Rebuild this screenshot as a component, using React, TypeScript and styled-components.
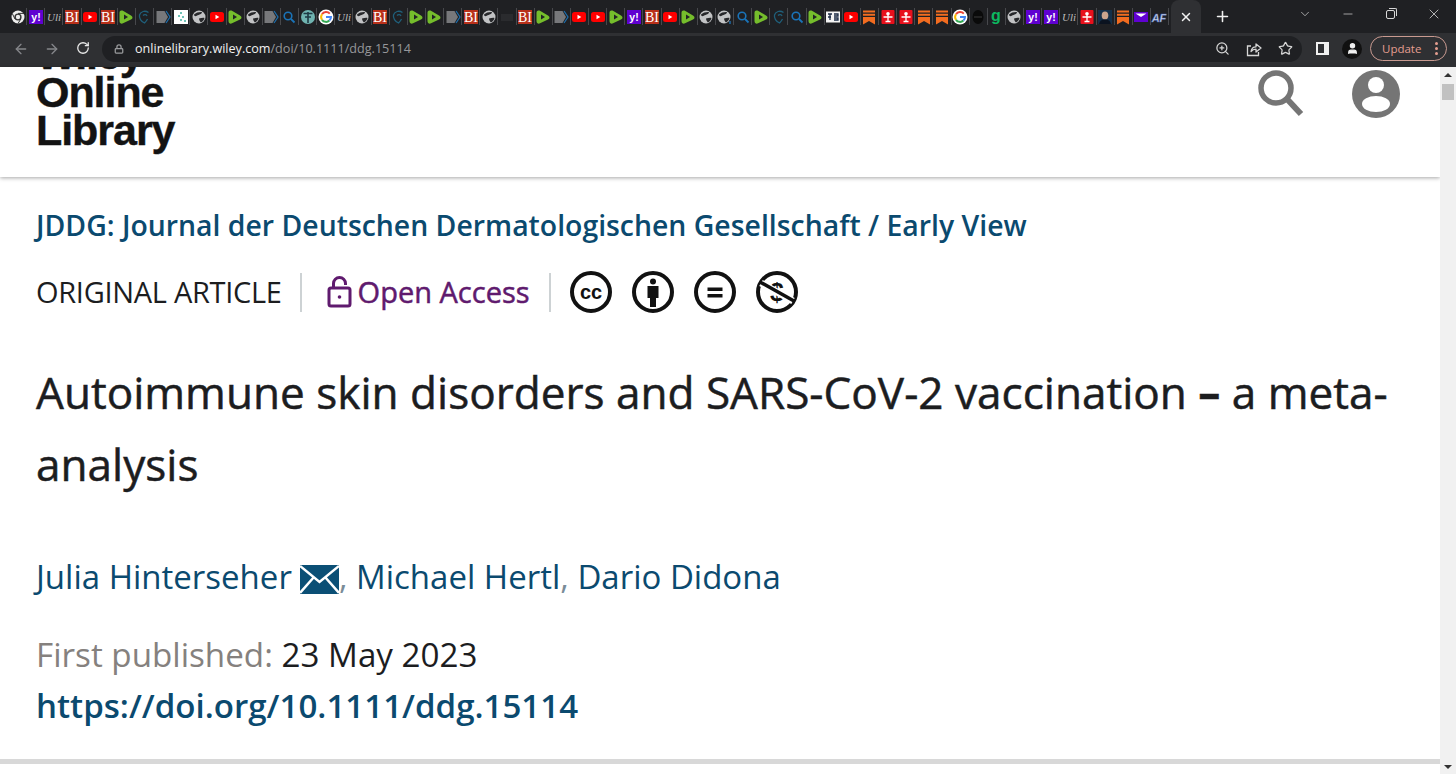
import React from 'react';
import styled, { createGlobalStyle } from 'styled-components';
import { ArrowLeft, ArrowRight, RotateCw, Lock, ZoomIn, Star, Plus, X, ChevronDown, Minus, User } from 'lucide-react';

type FaviconKind =
    | 'chrome' | 'yahoo' | 'uli' | 'bi' | 'youtube' | 'rumble' | 'shield' | 'arrow' | 'dots'
    | 'globe' | 'globeSearch' | 'search' | 'tree' | 'google' | 'dark' | 'blank' | 'zh'
    | 'bookmark' | 'red' | 'green' | 'photo' | 'mail' | 'af';

const favicons: FaviconKind[] = [
    'chrome', 'yahoo', 'uli', 'bi', 'youtube', 'bi', 'rumble', 'shield', 'arrow', 'dots', 'globe', 'youtube', 'rumble',
    'globe', 'arrow', 'search', 'tree', 'google', 'uli', 'globe', 'bi', 'shield', 'rumble', 'rumble', 'arrow', 'bi',
    'globe', 'blank', 'bi', 'rumble', 'arrow', 'youtube', 'youtube', 'rumble', 'yahoo', 'bi', 'youtube', 'rumble',
    'globe', 'globeSearch', 'search', 'rumble', 'shield', 'search', 'rumble', 'zh', 'youtube', 'bookmark', 'red', 'red',
    'bookmark', 'bookmark', 'google', 'dark', 'green', 'globe', 'yahoo', 'yahoo', 'uli', 'red', 'photo', 'bookmark',
    'mail', 'af',
];

const GlobalStyle = createGlobalStyle`
    html, body {
        margin: 0;
        height: 100%;
        overflow: hidden;
        background: #fff;
    }
`;

const Screen = styled.div`
    display: flex;
    flex-direction: column;
    width: 1456px;
    height: 774px;
    font-family: "Open Sans", sans-serif;
`;

const TabStrip = styled.div`
    display: flex;
    align-items: center;
    height: 33px;
    padding-left: 9px;
    background: #1f2023;
`;

const FaviconSlot = styled.div`
    display: flex;
    align-items: center;
    justify-content: center;
    flex: none;
    width: 18.13px;
    height: 17px;
    box-sizing: border-box;
    border-right: 1px solid #47484c;
`;

const ActiveTab = styled.div`
    display: flex;
    align-items: center;
    justify-content: center;
    flex: none;
    width: 30px;
    height: 33px;
    margin-left: 2px;
    border-radius: 8px 8px 0 0;
    background: #2f3033;
    color: #f1f1f1;
`;

const NewTab = styled.div`
    display: flex;
    margin-left: 13px;
    color: #f1f1f1;
`;

const WindowControls = styled.div`
    display: flex;
    align-items: center;
    margin-left: 52px;
    height: 28px;
    margin-top: -5px;
    color: #d8d8d8;
`;

const WindowButton = styled.div<{ $width: number }>`
    display: flex;
    justify-content: center;
    width: ${p => p.$width}px;
`;

const RestoreIcon = styled.div`
    position: relative;
    box-sizing: border-box;
    width: 9px;
    height: 9px;
    border: 1px solid #d8d8d8;
    border-radius: 2px;

    &::after {
        content: '';
        position: absolute;
        top: -3px;
        right: -3px;
        width: 8px;
        height: 8px;
        box-sizing: border-box;
        border-top: 1px solid #d8d8d8;
        border-right: 1px solid #d8d8d8;
        border-radius: 0 2px 0 0;
    }
`;

const Toolbar = styled.div`
    display: flex;
    align-items: center;
    height: 34px;
    padding-bottom: 3px;
    box-sizing: border-box;
    background: #2f3033;
    color: #8c8d90;
`;

const NavButton = styled.div<{ $bright?: boolean }>`
    display: flex;
    justify-content: center;
    flex: none;
    width: 31px;
    color: ${p => (p.$bright ? '#e8e8e8' : '#85868a')};
`;

const NavGroup = styled.div`
    display: flex;
    padding-left: 5px;
`;

const Omnibox = styled.div`
    display: flex;
    align-items: center;
    flex: none;
    width: 1200px;
    height: 26px;
    margin-left: 4px;
    padding: 0 9px 0 12px;
    box-sizing: border-box;
    border-radius: 13px;
    background: #1f2023;
    color: #9a9b9e;
`;

const UrlText = styled.div`
    margin-left: 11px;
    font-size: 12.6px;
    white-space: nowrap;
    color: #96979a;
`;

const UrlHost = styled.span`
    color: #f1f1f1;
`;

const OmniboxActions = styled.div`
    display: flex;
    align-items: center;
    gap: 16px;
    margin-left: auto;
    color: #d6d6d6;
`;

const SidePanelIcon = styled.div`
    flex: none;
    width: 6px;
    height: 9px;
    margin-left: 14px;
    border: solid #f1f1f1;
    border-width: 2px 5px 2px 2px;
    background: #2f3033;
`;

const Avatar = styled.div`
    display: flex;
    align-items: center;
    justify-content: center;
    flex: none;
    width: 20px;
    height: 20px;
    margin-left: 13px;
    border-radius: 50%;
    background: #111;
    color: #f1f1f1;
`;

const UpdatePill = styled.div`
    display: flex;
    align-items: center;
    justify-content: space-between;
    flex: none;
    width: 77px;
    height: 25px;
    margin-left: 8px;
    padding: 0 8px 0 11px;
    box-sizing: border-box;
    border: 1px solid #c99a90;
    border-radius: 13px;
    font-size: 11.5px;
    color: #e59e90;
`;

const MenuDots = styled.div`
    display: flex;
    flex-direction: column;
    gap: 2px;
`;

const Dot = styled.span`
    width: 3px;
    height: 3px;
    border-radius: 50%;
    background: #e59e90;
`;

const Viewport = styled.div`
    display: flex;
    flex: 1;
    min-height: 0;
`;

const Page = styled.div`
    display: flex;
    flex-direction: column;
    flex: 1;
    min-width: 0;
    background: #fff;
`;

const SiteHeader = styled.header`
    display: flex;
    flex: none;
    height: 110px;
    padding-left: 36px;
    overflow: hidden;
    box-shadow: 0 1px 4px rgba(0, 0, 0, 0.35);
`;

const Logo = styled.div`
    margin-top: -32px;
    font-family: "Liberation Sans", Arial, sans-serif;
    font-size: 43px;
    font-weight: 700;
    line-height: 38px;
    letter-spacing: -1.05px;
    -webkit-text-stroke: 0.4px #131313;
    color: #131313;
`;

const HeaderActions = styled.div`
    display: flex;
    align-items: flex-start;
    margin-left: auto;
    padding: 3px 40px 0 0;
    gap: 47px;
`;

const Article = styled.main`
    display: flex;
    flex-direction: column;
    flex: 1;
    padding-left: 36px;
`;

const JournalLink = styled.a`
    margin-top: 28px;
    font-size: 28.4px;
    font-weight: 600;
    line-height: 40px;
    color: #0b4a6f;
`;

const MetaRow = styled.div`
    display: flex;
    align-items: center;
    height: 42px;
    margin-top: 26px;
`;

const ArticleType = styled.span`
    margin-right: 18px;
    font-size: 29px;
    line-height: 42px;
    letter-spacing: -0.3px;
    color: #1c1d1f;
`;

const MetaDivider = styled.span`
    flex: none;
    width: 2px;
    height: 39px;
    background: #cdd2d4;
`;

const OpenAccess = styled.div`
    display: flex;
    align-items: center;
    gap: 6px;
    margin: 0 19px 0 25px;
    font-size: 29px;
    line-height: 42px;
    -webkit-text-stroke: 0.5px #5f1a6e;
    color: #5f1a6e;
`;

const LicenseIcons = styled.div`
    display: flex;
    gap: 20px;
    margin-left: 19px;
`;

const Title = styled.h1`
    margin: 43px 0 0;
    max-width: 1380px;
    font-size: 44.1px;
    font-weight: 400;
    line-height: 72px;
    -webkit-text-stroke: 0.5px #1c1d1f;
    color: #1c1d1f;
`;

const Authors = styled.div`
    display: flex;
    align-items: center;
    margin-top: 55px;
    font-size: 33px;
    line-height: 44px;
    color: #0b4a6f;
`;

const Comma = styled.span`
    color: #7a8c98;
`;

const MailIcon = styled.svg`
    margin: 5px 0 0 8px;
`;

const Published = styled.div`
    margin-top: 31px;
    font-size: 33.2px;
    line-height: 50px;
    color: #1c1d1f;
`;

const PublishedLabel = styled.span`
    color: #85817e;
`;

const DoiLink = styled.a`
    margin-top: 1px;
    font-size: 33.1px;
    font-weight: 600;
    line-height: 50px;
    color: #0b4a6f;
`;

const PageDivider = styled.div`
    flex: none;
    height: 5px;
    margin-bottom: 10px;
    background: #d8d8d8;
`;

const Scrollbar = styled.div`
    display: flex;
    flex-direction: column;
    align-items: center;
    flex: none;
    width: 16px;
    background: #f1f1f1;
`;

const ScrollArrow = styled.div<{ $down?: boolean }>`
    flex: none;
    width: 0;
    height: 0;
    margin: ${p => (p.$down ? 'auto 0 5px' : '6px 0 0')};
    border-left: 4px solid transparent;
    border-right: 4px solid transparent;
    ${p => (p.$down ? 'border-top: 4px solid #333;' : 'border-bottom: 4px solid #333;')}
`;

const ScrollThumb = styled.div`
    flex: none;
    width: 12px;
    height: 16px;
    margin-top: 7px;
    background: #c1c1c1;
`;

const iconFont = { fontFamily: '"Liberation Sans", sans-serif', fontWeight: 700 };

const Favicon = ({ kind }: { kind: FaviconKind }) => {
    const content = () => {
        switch (kind) {
            case 'chrome':
                return <>
                    <circle cx="8" cy="8" r="6.5" fill="#eee" />
                    <circle cx="8" cy="8" r="3.6" fill="#333" />
                    <circle cx="8" cy="8" r="2.2" fill="#eee" />
                    <path d="M8 4.4h6M5 10L2.5 5M10.8 10L8 14.5" stroke="#333" strokeWidth="1" />
                </>;
            case 'yahoo':
                return <>
                    <rect x="1" y="1" width="14" height="14" fill="#5f01d1" />
                    <text x="8" y="12" fontSize="10.5" fill="#fff" textAnchor="middle" style={iconFont}>y!</text>
                </>;
            case 'uli':
                return <text x="8" y="12" fontSize="11" fill="#bbb" textAnchor="middle" fontStyle="italic" fontFamily="Liberation Serif, serif">Uli</text>;
            case 'bi':
                return <>
                    <rect x="1" y="1" width="14" height="14" fill="#b8301a" />
                    <text x="8" y="13" fontSize="14" fill="#fff" textAnchor="middle" fontFamily="Liberation Serif, serif">BI</text>
                </>;
            case 'youtube':
                return <>
                    <rect x="1" y="3" width="14" height="10" rx="2.5" fill="#f00" />
                    <path d="M6.5 5.8L10.3 8L6.5 10.2Z" fill="#fff" />
                </>;
            case 'rumble':
                return <>
                    <path d="M3.5 1.5C2 1.5 1.5 2.5 1.5 4v8c0 2 1.5 3 3 2.6l8.5-4c2-1 2-3.2 0-4.2l-8.5-4.9z" fill="#75bd2c" />
                    <path d="M6 5.5L10 8L6 10.5Z" fill="#202124" />
                </>;
            case 'shield':
                return <path d="M12.5 3.5C9 1 4.5 2.5 3.5 6c-.6 3 1.5 6.5 5 8 1-1 2-2 3-4M7 6.5c1.5-1.5 3.5-1 4 .5" fill="none" stroke="#1f5f7a" strokeWidth="1.3" />;
            case 'arrow':
                return <>
                    <path d="M1.5 2H9.5L13 8L9.5 14H1.5Z" fill="#77787b" />
                    <path d="M11 2L15 8L11 14" fill="none" stroke="#1c6fb0" strokeWidth="1.2" />
                </>;
            case 'dots':
                return <>
                    <rect x="1" y="1" width="14" height="14" fill="#fff" />
                    <path d="M7 3h2v2H7zM5 6h2v2H5zM9 7h2v2H9zM7 10h2v2H7zM11 11h2v2h-2z" fill="#6fc3b8" />
                </>;
            case 'globe':
            case 'globeSearch':
                return <>
                    <circle cx="8" cy="8" r="6.5" fill="#c2c3c5" />
                    <path d="M3 5.5C5 3.5 8 2.8 11 3c0 2-2 2.5-3.5 3C6 6.500 5 7.500 3.500 7zM8 9.500c2-.5 4.500-1 5.500-.5-.5 2-2 3.500-3.500 4.500-1-1-2-2.500-2-4z" fill="#27282b" />
                    {kind === 'globeSearch' && <path d="M14 12v3" stroke="#1c6fb0" strokeWidth="1.4" />}
                </>;
            case 'search':
                return <>
                    <circle cx="7" cy="7" r="3.8" fill="none" stroke="#1a73b8" strokeWidth="1.6" />
                    <path d="M10 10L13.500 13.500" stroke="#1a73b8" strokeWidth="1.8" />
                </>;
            case 'tree':
                return <>
                    <circle cx="8" cy="8" r="7" fill="#6fb3b0" />
                    <path d="M3.500 4.500h9M8 3v11M5 8h6" stroke="#1e3a44" strokeWidth="1.6" />
                </>;
            case 'google':
                return <>
                    <circle cx="8" cy="8" r="7.500" fill="#fff" />
                    <path d="M11.800 4.600A5 5 0 0 0 4 5.200" fill="none" stroke="#ea4335" strokeWidth="2" />
                    <path d="M4 5.200A5 5 0 0 0 4 10.800" fill="none" stroke="#fbbc05" strokeWidth="2" />
                    <path d="M4 10.800A5 5 0 0 0 11.400 11.600" fill="none" stroke="#34a853" strokeWidth="2" />
                    <path d="M11.400 11.600A5 5 0 0 0 13 8H8" fill="none" stroke="#4285f4" strokeWidth="2" />
                </>;
            case 'dark':
                return <>
                    <ellipse cx="8" cy="8" rx="5.500" ry="7" fill="#0a0a0a" />
                    <path d="M4 8h8" stroke="#333" strokeWidth="1.200" />
                </>;
            case 'blank':
                return <rect x="2" y="5" width="12" height="7" fill="#2a2b2e" />;
            case 'zh':
                return <>
                    <rect x="1" y="2.500" width="14" height="11" fill="#f4f4f4" />
                    <path d="M3 5h4M5 5v6M9 5h4v2h-4M9 9h4v2H9M3 8h3" stroke="#1a2a44" strokeWidth="1.300" fill="none" />
                </>;
            case 'bookmark':
                return <path d="M2 1.500h12v2H2zM2 4.700h12v2H2zM2 8h12v7.500L8 12l-6 3.500z" fill="#f26c20" />;
            case 'red':
                return <>
                    <rect x="1.500" y="1" width="13" height="14" rx="1" fill="#e8101c" />
                    <circle cx="8" cy="4.800" r="1.800" fill="#fff" />
                    <path d="M3.500 8h9M8 6v6M5.500 12.500h5" stroke="#fff" strokeWidth="1.300" />
                </>;
            case 'green':
                return <text x="8" y="11.500" fontSize="16" fill="#0cb760" textAnchor="middle" style={iconFont}>g</text>;
            case 'photo':
                return <>
                    <rect x="1" y="1" width="14" height="14" fill="#14304a" />
                    <ellipse cx="8" cy="6.500" rx="3.300" ry="4" fill="#c9a58e" />
                    <path d="M2 15c1-4 4-4.500 6-4.500s5 .5 6 4.500z" fill="#0b1320" />
                </>;
            case 'mail':
                return <>
                    <rect x="1" y="3" width="14" height="10" fill="#5f01d1" />
                    <path d="M2.500 4.500h11L8 8z" fill="#fff" />
                </>;
            case 'af':
                return <text x="8" y="12.500" fontSize="11" fill="#c9d4ea" stroke="#3b5aa8" strokeWidth=".4" textAnchor="middle" fontStyle="italic" style={iconFont}>AF</text>;
        }
    };

    return <svg width="16" height="16" viewBox="0 0 16 16" aria-hidden="true">{content()}</svg>;
};

const ShareIcon = () => (
    <svg width="16" height="16" viewBox="0 0 16 16" fill="none" stroke="currentColor" strokeWidth="1.300">
        <path d="M5 5H1.500V14.500H12.500V11" />
        <path d="M5 10.500C5.500 7.500 7.500 5.800 10 5.800V3L15 7L10 11V8.200C8 8.200 6.200 9 5 10.500Z" strokeLinejoin="round" />
    </svg>
);

const OpenLock = () => (
    <svg width="25" height="32" viewBox="0 0 25 32" fill="none" stroke="#5f1a6e" strokeWidth="3">
        <rect x="2" y="12" width="21" height="18" rx="2" />
        <path d="M6.500 12V7.500a6 6 0 0 1 12 0V9" />
        <circle cx="12.500" cy="21" r="1.800" fill="#5f1a6e" stroke="none" />
    </svg>
);

const Badge = ({ children }: { children: React.ReactNode }) => (
    <svg width="42" height="42" viewBox="0 0 42 42">
        <circle cx="21" cy="21" r="19" fill="#fff" stroke="#111" strokeWidth="4" />
        {children}
    </svg>
);

const App = () => {
    return (
        <Screen>
            <GlobalStyle />
            <TabStrip>
                {favicons.map((kind, i) => (
                    <FaviconSlot key={i}>
                        <Favicon kind={kind} />
                    </FaviconSlot>
                ))}
                <ActiveTab><X size={14} strokeWidth={2.5} /></ActiveTab>
                <NewTab><Plus size={17} strokeWidth={2.2} /></NewTab>
                <WindowControls>
                    <WindowButton $width={43}><ChevronDown size={14} strokeWidth={1.2} /></WindowButton>
                    <WindowButton $width={43}><Minus size={14} strokeWidth={1.2} /></WindowButton>
                    <WindowButton $width={43}><RestoreIcon /></WindowButton>
                    <WindowButton $width={44}><X size={16} strokeWidth={1.2} /></WindowButton>
                </WindowControls>
            </TabStrip>
            <Toolbar>
                <NavGroup>
                    <NavButton><ArrowLeft size={16} /></NavButton>
                    <NavButton><ArrowRight size={16} /></NavButton>
                    <NavButton $bright><RotateCw size={14} strokeWidth={2.2} /></NavButton>
                </NavGroup>
                <Omnibox>
                    <Lock size={10} strokeWidth={3} />
                    <UrlText><UrlHost>onlinelibrary.wiley.com</UrlHost>/doi/10.1111/ddg.15114</UrlText>
                    <OmniboxActions>
                        <ZoomIn size={15} />
                        <ShareIcon />
                        <Star size={15} />
                    </OmniboxActions>
                </Omnibox>
                <SidePanelIcon />
                <Avatar><User size={13} fill="#f1f1f1" /></Avatar>
                <UpdatePill>
                    Update
                    <MenuDots><Dot /><Dot /><Dot /></MenuDots>
                </UpdatePill>
            </Toolbar>
            <Viewport>
                <Page>
                    <SiteHeader>
                        <Logo>Wiley<br />Online<br />Library</Logo>
                        <HeaderActions>
                            <svg width="48" height="48" viewBox="0 0 48 48" fill="none" stroke="#757575">
                                <circle cx="19" cy="18" r="15" strokeWidth="5.500" />
                                <path d="M30 29L44 44" strokeWidth="6" />
                            </svg>
                            <svg width="48" height="48" viewBox="0 0 48 48">
                                <circle cx="24" cy="24" r="24" fill="#757575" />
                                <circle cx="24" cy="15" r="8" fill="#fff" />
                                <ellipse cx="24" cy="34" rx="14" ry="8" fill="#fff" />
                            </svg>
                        </HeaderActions>
                    </SiteHeader>
                    <Article>
                        <JournalLink>JDDG: Journal der Deutschen Dermatologischen Gesellschaft / Early View</JournalLink>
                        <MetaRow>
                            <ArticleType>ORIGINAL ARTICLE</ArticleType>
                            <MetaDivider />
                            <OpenAccess><OpenLock />Open Access</OpenAccess>
                            <MetaDivider />
                            <LicenseIcons>
                                <Badge>
                                    <text x="21" y="28" fontSize="20" textAnchor="middle" fill="#111" style={iconFont}>cc</text>
                                </Badge>
                                <Badge>
                                    <circle cx="21" cy="10.500" r="3" fill="#111" />
                                    <path d="M15.500 15h11v12h-2.500v9h-6v-9h-2.500z" fill="#111" />
                                </Badge>
                                <Badge>
                                    <path d="M13.500 16.500h15v3.500h-15zM13.500 23h15v3.500h-15z" fill="#111" />
                                </Badge>
                                <Badge>
                                    <text x="21" y="30" fontSize="25" textAnchor="middle" fill="#111" style={iconFont}>$</text>
                                    <path d="M5 12L37 30" stroke="#fff" strokeWidth="7" />
                                    <path d="M4 11L38 30" stroke="#111" strokeWidth="3.500" />
                                </Badge>
                            </LicenseIcons>
                        </MetaRow>
                        <Title>Autoimmune skin disorders and SARS-CoV-2 vaccination <strong>–</strong> a meta-analysis</Title>
                        <Authors>
                            Julia Hinterseher
                            <MailIcon width="39" height="29" viewBox="0 0 39 29">
                                <rect width="39" height="29" fill="#0b4f75" />
                                <path d="M0 1L19.500 17L39 1M0 28L14 12M39 28L25 12" fill="none" stroke="#fff" strokeWidth="2.500" />
                            </MailIcon>
                            <Comma>,</Comma>&nbsp;Michael Hertl<Comma>,</Comma>&nbsp;Dario Didona
                        </Authors>
                        <Published><PublishedLabel>First published:</PublishedLabel> 23 May 2023</Published>
                        <DoiLink>https://doi.org/10.1111/ddg.15114</DoiLink>
                    </Article>
                    <PageDivider />
                </Page>
                <Scrollbar>
                    <ScrollArrow />
                    <ScrollThumb />
                    <ScrollArrow $down />
                </Scrollbar>
            </Viewport>
        </Screen>
    );
};

export default App;
